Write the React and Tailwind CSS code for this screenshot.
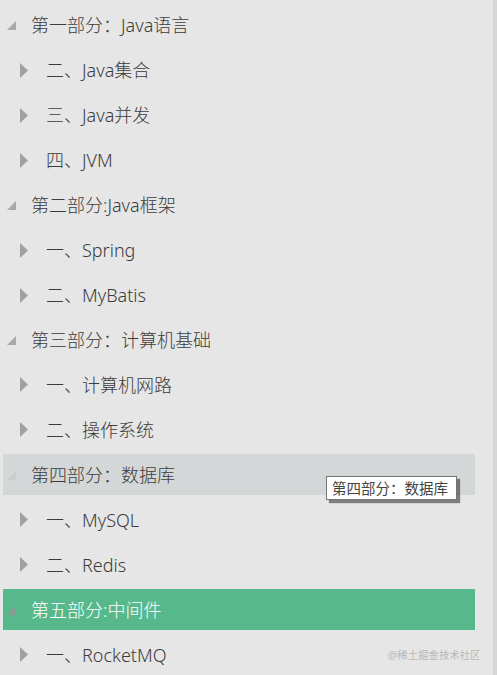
import React from "react";

const items = [
  { t: "第一部分：Java语言", l: 0 },
  { t: "二、Java集合", l: 1 },
  { t: "三、Java并发", l: 1 },
  { t: "四、JVM", l: 1 },
  { t: "第二部分:Java框架", l: 0 },
  { t: "一、Spring", l: 1 },
  { t: "二、MyBatis", l: 1 },
  { t: "第三部分：计算机基础", l: 0 },
  { t: "一、计算机网路", l: 1 },
  { t: "二、操作系统", l: 1 },
  { t: "第四部分：数据库", l: 0, hover: true },
  { t: "一、MySQL", l: 1 },
  { t: "二、Redis", l: 1 },
  { t: "第五部分:中间件", l: 0, active: true },
  { t: "一、RocketMQ", l: 1 },
];

function Expanded({ color }) {
  return (
    <svg width="10" height="10" viewBox="0 0 10 10" className="shrink-0">
      <polygon points="10,0 10,9 1,9" fill={color} />
    </svg>
  );
}

function Collapsed() {
  return (
    <svg width="8" height="15" viewBox="0 0 8 15" className="shrink-0">
      <polygon points="0,0 8,7.5 0,15" fill="#a0a0a0" />
    </svg>
  );
}

export default function App() {
  const font = { fontFamily: '"Noto Sans", "Noto Sans CJK SC", sans-serif' };
  return (
    <div className="relative flex h-[675px] w-[497px] overflow-hidden bg-[#e6e6e6]" style={font}>
      <div className="flex w-[493px] flex-col gap-[4px] pt-[5px]">
        {items.map((it, i) => {
          const bg = it.active ? "bg-[#57b98b]" : it.hover ? "bg-[#d3d7d7]" : "";
          const txt = it.active ? "text-white" : "text-[#3c3c3c]";
          return (
            <div key={i} className={`ml-[3px] flex h-[41px] w-[472px] items-center ${bg}`}>
              {it.l === 0 ? (
                <>
                  <div className="ml-[3px] mt-[2px] flex w-[25px]">
                    <Expanded color={it.active ? "#8a9a90" : it.hover ? "#c9cdcd" : "#a8a8a8"} />
                  </div>
                  <span className={`text-[18px] font-light leading-none ${txt}`}>{it.t}</span>
                </>
              ) : (
                <>
                  <div className="ml-[17px] flex w-[26px]">
                    <Collapsed />
                  </div>
                  <span className={`text-[18px] font-light leading-none ${txt}`}>{it.t}</span>
                </>
              )}
            </div>
          );
        })}
      </div>
      <div className="h-full w-[4px] bg-[#d6d6d6]" />
      <div className="absolute left-[326px] top-[476px] flex h-[24px] w-[131px] items-center border border-[#767676] bg-white pl-[5px] text-[14.5px] leading-none text-[#444] shadow-[3px_3px_1px_rgba(0,0,0,0.45)]">
        第四部分：数据库
      </div>
      <div className="absolute left-[388px] top-[647px] text-[10.4px] leading-[16px] text-[#b8b8b8]">
        @稀土掘金技术社区
      </div>
    </div>
  );
}
